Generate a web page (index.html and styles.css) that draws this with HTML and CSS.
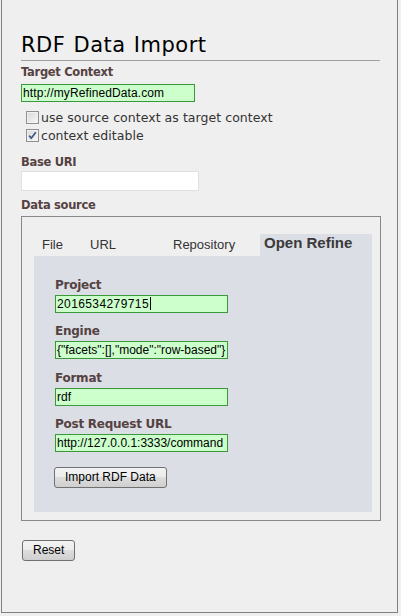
FILE: index.html
```html
<!DOCTYPE html>
<html>
<head>
<meta charset="utf-8">
<link rel="stylesheet" href="styles.css">
</head>
<body>
<div class="frame">
  <div class="content">
    <h1 class="title">RDF Data Import</h1>
    <div class="rule"></div>
    <div class="label first-label">Target Context</div>
    <div class="field green target-field">http://myRefinedData.com</div>
    <div class="checks">
      <div class="check"><span class="box"></span><span>use source context as target context</span></div>
      <div class="check"><span class="box"><svg width="11" height="11" viewBox="0 0 11 11"><path d="M2.2 5.6 L4.3 8.2 L8.8 2.2" fill="none" stroke="#3f5587" stroke-width="1.7"/></svg></span><span>context editable</span></div>
    </div>
    <div class="label base-label">Base URI</div>
    <div class="field plain base-field"></div>
    <div class="label source-label">Data source</div>
    <div class="fieldset">
      <div class="tabs">
        <div class="tab tab-file">File</div>
        <div class="tab tab-url">URL</div>
        <div class="tab tab-repo">Repository</div>
        <div class="tab tab-refine">Open Refine</div>
      </div>
      <div class="panel">
        <div class="group">
          <div class="plabel">Project</div>
          <div class="field green pfield digits">2016534279715<span class="caret"></span></div>
        </div>
        <div class="group">
          <div class="plabel">Engine</div>
          <div class="field green pfield">{"facets":[],"mode":"row-based"}</div>
        </div>
        <div class="group">
          <div class="plabel">Format</div>
          <div class="field green pfield">rdf</div>
        </div>
        <div class="group">
          <div class="plabel">Post Request URL</div>
          <div class="field green pfield">http://127.0.0.1:3333/command</div>
        </div>
        <button class="btn import-btn">Import RDF Data</button>
      </div>
    </div>
    <button class="btn reset-btn">Reset</button>
  </div>
</div>
</body>
</html>
```

FILE: styles.css
```css
body {
  margin: 0;
  background: #efefef;
}

.frame {
  box-sizing: border-box;
  width: 397px;
  height: 613px;
  margin-left: 1px;
  border: 1px solid #7f7f7f;
  border-top: 0;
  padding: 0 0 0 19px;
}

.content {
  width: 360px;
  display: flex;
  flex-direction: column;
  align-items: flex-start;
}

.title {
  margin: 33px 0 0;
  font: normal 21px/24px "DejaVu Sans", sans-serif;
  letter-spacing: 0.5px;
  word-spacing: 1px;
  color: #000;
}

.rule {
  align-self: stretch;
  width: 359px;
  height: 1px;
  margin-top: 3px;
  background: #a0a0a0;
}

.label {
  font: bold 11.5px/14px "DejaVu Sans", sans-serif;
  letter-spacing: -0.3px;
  color: #554242;
}

.first-label { margin-top: 4px; }
.base-label { margin-top: 10px; }
.source-label { margin-top: 7px; }

.field {
  box-sizing: border-box;
  height: 18px;
  border: 1px solid #3a983a;
  padding: 0 1px;
  font: 12px/16px "Liberation Sans", Arial, sans-serif;
  color: #000;
  white-space: nowrap;
  overflow: hidden;
}

.digits {
  letter-spacing: 0.4px;
}

.green {
  background: #ccffcc;
}

.plain {
  background: #fff;
  border-color: #e0e0e0;
}

.target-field {
  width: 174px;
  margin-top: 5px;
  letter-spacing: 0.1px;
}

.base-field {
  width: 178px;
  height: 20px;
  margin-top: 2px;
}

.checks {
  margin-top: 7px;
  padding-left: 5px;
}

.check {
  display: flex;
  align-items: flex-start;
  height: 18px;
  font: 12.5px/18px "DejaVu Sans", sans-serif;
  letter-spacing: 0.05px;
  color: #333;
}

.box {
  box-sizing: border-box;
  width: 13px;
  height: 13px;
  margin: 2px 2px 0 0;
  border: 1px solid #8e8f8f;
  background: linear-gradient(135deg, #d8d8d8, #f8f8f8);
  box-shadow: inset 0 0 0 1px #f2f2f2;
  display: flex;
  align-items: center;
  justify-content: center;
}

.box svg {
  display: block;
}

.fieldset {
  box-sizing: border-box;
  width: 360px;
  margin-top: 4px;
  border: 1px solid #888;
  padding: 17px 8px 8px 12px;
}

.tabs {
  display: flex;
  height: 22px;
}

.tab {
  box-sizing: border-box;
  padding-left: 8px;
  font: 13px/22px "Liberation Sans", Arial, sans-serif;
  color: #333;
}

.tab-file { width: 48px; }
.tab-url { width: 83px; }
.tab-repo { width: 95px; }
.tab-refine {
  width: 112px;
  padding-left: 4px;
  font-weight: bold;
  font-size: 15px;
  line-height: 18px;
  color: #3a3a3a;
  background: #dcdee5;
}

.panel {
  display: flex;
  flex-direction: column;
  align-items: flex-start;
  background: #dcdee5;
  padding: 22px 0 24px 21px;
}

.group + .group {
  margin-top: 11.33px;
}

.plabel {
  font: bold 12px/14px "DejaVu Sans", sans-serif;
  letter-spacing: -0.25px;
  color: #554242;
}

.pfield {
  width: 173px;
  margin-top: 3px;
}

.caret {
  display: inline-block;
  width: 1px;
  height: 13px;
  margin-left: 1px;
  vertical-align: -2px;
  background: #000;
}

.btn {
  box-sizing: border-box;
  height: 21px;
  padding: 0 10px;
  border: 1px solid #707070;
  border-radius: 3px;
  background: linear-gradient(#f3f3f3, #ebebeb 50%, #dddddd 50%, #cfcfcf);
  font: 12px/19px "Liberation Sans", Arial, sans-serif;
  color: #000;
}

.import-btn {
  margin-top: 15px;
  margin-left: -1px;
}

.reset-btn {
  margin-top: 19px;
  margin-left: 1px;
}
```
